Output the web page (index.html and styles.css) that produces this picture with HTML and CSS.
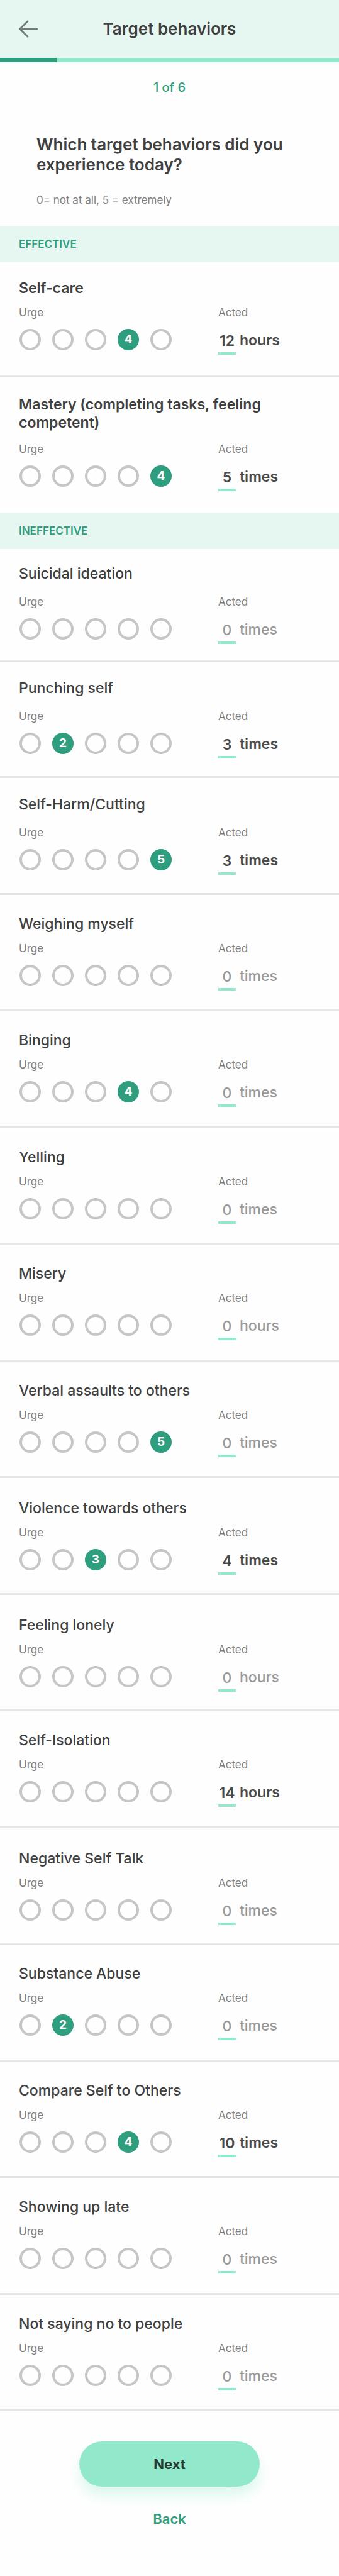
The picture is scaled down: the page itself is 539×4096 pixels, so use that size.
FILE: index.html
```html
<!DOCTYPE html>
<html lang="en">
<head>
<meta charset="utf-8">
<meta name="viewport" content="width=device-width, initial-scale=1">
<title>Target behaviors</title>
<link rel="stylesheet" href="styles.css">
</head>
<body>
<header class="topbar">
  <button class="topbar-back" type="button" aria-label="Go back">
    <svg class="arrow" viewBox="0 0 36 32" aria-hidden="true"><path d="M17 3.7 4.5 16 17 28.3M4.5 16H32"/></svg>
  </button>
  <h1 class="topbar-title">Target behaviors</h1>
</header>
<div class="progress" role="progressbar" aria-label="Step" aria-valuemin="0" aria-valuemax="6" aria-valuenow="1"><div class="progress-fill"></div></div>
<main>
  <p class="step">1 of 6</p>
  <div class="intro">
    <h2 class="question">Which target behaviors did you experience today?</h2>
    <p class="hint">0= not at all, 5 = extremely</p>
  </div>
  <h3 class="band">EFFECTIVE</h3>
  <div class="rows rows-effective" id="effective"></div>
  <h3 class="band">INEFFECTIVE</h3>
  <div class="rows rows-ineffective" id="ineffective"></div>
  <div class="actions">
    <button class="next" type="button">Next</button>
    <a class="back" href="#">Back</a>
  </div>
</main>
<script src="app.js"></script>
</body>
</html>
```
FILE: styles.css
```css
:root {
  --green: #2f9e7e;
  --mint: #92e8cb;
  --pale: #e6f7f1;
  --ink: #404040;
  --grey: #808080;
}

* {
  box-sizing: border-box;
}

body {
  margin: 0;
  background: #fefefe;
  color: var(--ink);
  font-family: Inter, "Liberation Sans", sans-serif;
}

h1, h2, h3, h4, p {
  margin: 0;
}

button, input {
  font-family: inherit;
}

.topbar {
  display: grid;
  grid-template-columns: 36px 1fr 36px;
  align-items: center;
  height: 92px;
  padding: 0 27px;
  background: var(--pale);
}

.topbar-back {
  display: flex;
  padding: 0;
  border: 0;
  background: none;
}

.arrow {
  width: 36px;
  height: 32px;
  fill: none;
  stroke: #737b78;
  stroke-width: 2.7;
  stroke-linecap: round;
  stroke-linejoin: round;
}

.topbar-title {
  font-size: 26px;
  line-height: 32px;
  font-weight: 600;
  text-align: center;
}

.progress {
  height: 7px;
  background: var(--mint);
}

.progress-fill {
  width: calc(100% / 6);
  height: 100%;
  background: var(--green);
}

.step {
  padding-top: 27px;
  color: var(--green);
  font-size: 20px;
  line-height: 26px;
  font-weight: 500;
  text-align: center;
}

.intro {
  padding: 62px 58px 29px;
}

.question {
  font-size: 26px;
  line-height: 32px;
  font-weight: 600;
}

.hint {
  padding-top: 28px;
  color: var(--grey);
  font-size: 17px;
  line-height: 24px;
}

.band {
  padding: 0 30px;
  background: var(--pale);
  color: var(--green);
  font-size: 17px;
  line-height: 58px;
  font-weight: 600;
}

.row {
  padding: 32px 30px 28px;
  border-bottom: 3px solid #e6e6e6;
}

.rows-ineffective .row {
  min-height: 185px;
}

.rows-ineffective .row:nth-child(odd) {
  min-height: 186px;
}

.row.row-low {
  padding-top: 34px;
}

.row.row-open {
  padding-top: 28px;
}

.rows-effective .row {
  padding: 27px 30px 32px;
}

.rows-effective .row:last-child {
  padding: 30px 30px 34px;
  border-bottom: 0;
}

.rows-ineffective .row:first-child {
  min-height: 179px;
  padding: 25px 30px;
}

.row-title {
  padding-bottom: 14px;
  font-size: 23px;
  line-height: 29px;
  font-weight: 500;
}

.row-open .row-title {
  padding-bottom: 20px;
}

.rows-effective .row-title {
  font-weight: 600;
}

.rows-effective .row:last-child .row-title {
  padding-bottom: 17px;
}

.fields {
  display: grid;
  grid-template-columns: 1fr 162px;
}

.field-label {
  display: block;
  padding-bottom: 16px;
  color: var(--grey);
  font-size: 17px;
  line-height: 20px;
}

.scale {
  display: flex;
  gap: 18px;
  padding-left: 1px;
}

.dot {
  display: grid;
  place-items: center;
  width: 34px;
  height: 34px;
}

.dot-input,
.dot-number {
  grid-area: 1 / 1;
}

.dot-input {
  appearance: none;
  width: 34px;
  height: 34px;
  margin: 0;
  border: 4px solid #c6c6c6;
  border-radius: 50%;
}

.dot-input:checked {
  border-color: var(--green);
  background: var(--green);
}

.dot-number {
  color: #fff;
  font-size: 19px;
  line-height: 24px;
  font-weight: 700;
}

.amount {
  display: flex;
  gap: 6px;
  color: #4a4a4a;
  font-size: 23px;
  line-height: 37px;
  font-weight: 600;
}

.amount-input {
  width: 28px;
  height: 41px;
  padding: 0;
  border: 0;
  border-bottom: 4px solid var(--mint);
  border-radius: 0;
  background: none;
  color: inherit;
  font-size: inherit;
  font-weight: inherit;
  text-align: center;
}

.amount-zero {
  color: #999;
  font-weight: 500;
}

.actions {
  display: flex;
  flex-direction: column;
  align-items: center;
  gap: 37px;
  padding: 48px 30px 75px;
}

.next {
  width: 60%;
  max-width: 288px;
  height: 72px;
  border: 0;
  border-radius: 36px;
  background: var(--mint);
  box-shadow: 0 14px 20px rgba(146, 232, 203, 0.3);
  color: #263b34;
  font-size: 22px;
  font-weight: 700;
}

.back {
  color: var(--green);
  font-size: 22px;
  line-height: 28px;
  font-weight: 600;
  text-decoration: none;
}
```
FILE: app.js
```js
// name, selected position (0 = none), number shown, amount, unit, spacing variant
const effective = [
  ["Self-care", 4, 4, 12, "hours", ""],
  ["Mastery (completing tasks, feeling competent)", 5, 4, 5, "times", ""],
];

const ineffective = [
  ["Suicidal ideation", 0, 0, 0, "times", "row-open"],
  ["Punching self", 2, 2, 3, "times", "row-open"],
  ["Self-Harm/Cutting", 5, 5, 3, "times", "row-open"],
  ["Weighing myself", 0, 0, 0, "times", ""],
  ["Binging", 4, 4, 0, "times", ""],
  ["Yelling", 0, 0, 0, "times", ""],
  ["Misery", 0, 0, 0, "hours", ""],
  ["Verbal assaults to others", 5, 5, 0, "times", ""],
  ["Violence towards others", 3, 3, 4, "times", "row-low"],
  ["Feeling lonely", 0, 0, 0, "hours", "row-low"],
  ["Self-Isolation", 0, 0, 14, "hours", ""],
  ["Negative Self Talk", 0, 0, 0, "times", "row-low"],
  ["Substance Abuse", 2, 2, 0, "times", ""],
  ["Compare Self to Others", 4, 4, 10, "times", ""],
  ["Showing up late", 0, 0, 0, "times", ""],
  ["Not saying no to people", 0, 0, 0, "times", ""],
];

function renderDot(id, position, selected, shown) {
  const checked = position === selected;
  return `<label class="dot">
    <input class="dot-input" type="radio" name="${id}-urge" value="${position}" aria-label="${position}"${checked ? " checked" : ""}>
    ${checked ? `<span class="dot-number">${shown}</span>` : ""}
  </label>`;
}

function renderRow([name, selected, shown, amount, unit, variant], id) {
  const dots = [1, 2, 3, 4, 5].map((n) => renderDot(id, n, selected, shown)).join("");
  return `<section class="row ${variant}">
    <h4 class="row-title">${name}</h4>
    <div class="fields">
      <div role="radiogroup" aria-labelledby="${id}-label">
        <span class="field-label" id="${id}-label">Urge</span>
        <div class="scale">${dots}</div>
      </div>
      <div>
        <label class="field-label" for="${id}-acted">Acted</label>
        <div class="amount ${amount ? "" : "amount-zero"}">
          <input class="amount-input" id="${id}-acted" type="text" inputmode="numeric" value="${amount}">
          <span>${unit}</span>
        </div>
      </div>
    </div>
  </section>`;
}

function renderList(target, rows) {
  document.getElementById(target).innerHTML = rows
    .map((row, index) => renderRow(row, `${target}-${index}`))
    .join("");
}

renderList("effective", effective);
renderList("ineffective", ineffective);
```
